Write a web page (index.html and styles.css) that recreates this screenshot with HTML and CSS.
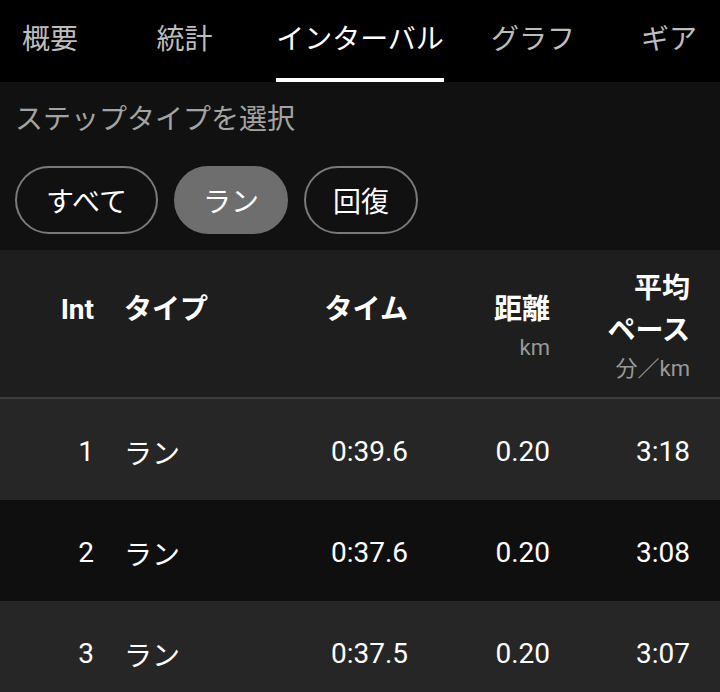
FILE: index.html
```html
<!DOCTYPE html>
<html lang="ja">
<head>
<meta charset="utf-8">
<title>インターバル</title>
<link rel="stylesheet" href="styles.css">
</head>
<body>
<nav class="tabs">
  <div class="tab"><span class="tab-label">概要</span></div>
  <div class="tab"><span class="tab-label">統計</span></div>
  <div class="tab"><span class="tab-label active">インターバル</span></div>
  <div class="tab"><span class="tab-label">グラフ</span></div>
  <div class="tab"><span class="tab-label">ギア</span></div>
</nav>

<section class="filter">
  <div class="filter-title">ステップタイプを選択</div>
  <div class="chips">
    <button class="chip wide">すべて</button>
    <button class="chip selected">ラン</button>
    <button class="chip">回復</button>
  </div>
</section>

<div class="table">
  <div class="thead">
    <div class="th num"><span class="th-label">Int</span><span class="th-unit"></span></div>
    <div class="th type"><span class="th-label">タイプ</span><span class="th-unit"></span></div>
    <div class="th"><span class="th-label">タイム</span><span class="th-unit"></span></div>
    <div class="th"><span class="th-label">距離</span><span class="th-unit">km</span></div>
    <div class="th"><span class="th-label">平均<br>ペース</span><span class="th-unit">分／km</span></div>
  </div>
  <div class="row odd">
    <div class="td num">1</div><div class="td type">ラン</div><div class="td">0:39.6</div><div class="td">0.20</div><div class="td">3:18</div>
  </div>
  <div class="row even">
    <div class="td num">2</div><div class="td type">ラン</div><div class="td">0:37.6</div><div class="td">0.20</div><div class="td">3:08</div>
  </div>
  <div class="row odd">
    <div class="td num">3</div><div class="td type">ラン</div><div class="td">0:37.5</div><div class="td">0.20</div><div class="td">3:07</div>
  </div>
</div>
</body>
</html>
```

FILE: styles.css
```css
* { box-sizing: border-box; }

html, body {
  margin: 0;
  padding: 0;
  background: #0f0f0f;
  font-family: Roboto, "Noto Sans CJK JP", sans-serif;
  color: #ffffff;
  overflow: hidden;
}

.tabs {
  display: grid;
  grid-template-columns: 100px 169px 182px 164px 108px;
  height: 82px;
  background: #000000;
  overflow: hidden;
  white-space: nowrap;
}

.tab {
  display: flex;
  justify-content: center;
  height: 82px;
}

.tab-label {
  display: flex;
  align-items: center;
  height: 82px;
  padding-bottom: 5px;
  font-size: 28px;
  color: #bdbdbd;
  border-bottom: 4px solid transparent;
}

.tab-label.active {
  color: #ffffff;
  border-bottom-color: #ffffff;
}

.filter {
  background: #111111;
  padding: 18px 0 16px 15px;
}

.filter-title {
  font-size: 28px;
  line-height: 40px;
  color: #a3a3a3;
}

.chips {
  display: flex;
  gap: 16px;
  margin-top: 26px;
}

.chip {
  height: 68px;
  padding: 5px 27px 0;
  border: 2px solid #7a7a7a;
  border-radius: 34px;
  background: transparent;
  color: #ffffff;
  font-family: Roboto, "Noto Sans CJK JP", sans-serif;
  font-size: 28px;
  line-height: 1;
}

.chip.wide {
  padding-left: 29px;
  padding-right: 29px;
}

.chip.selected {
  background: #6e6e6e;
  border-color: #6e6e6e;
}

.thead,
.row {
  display: grid;
  grid-template-columns: 94px 172px 142px 142px 140px;
  padding-right: 30px;
}

.thead {
  height: 149px;
  padding-top: 6px;
  background: #1e1e1e;
  border-bottom: 2px solid #3c3c3c;
  align-items: center;
}

.th {
  display: flex;
  flex-direction: column;
  align-items: flex-end;
  text-align: right;
  font-weight: 700;
}

.th.type {
  align-items: flex-start;
  text-align: left;
  padding-left: 30px;
}

.th-label {
  font-size: 28px;
  line-height: 42px;
}

.th-unit {
  height: 34px;
  font-size: 22px;
  line-height: 34px;
  font-weight: 400;
  color: #999999;
}

.row {
  height: 101px;
  padding-top: 4px;
  align-items: center;
  font-size: 28px;
}

.row.odd { background: #262626; }
.row.even { background: #0f0f0f; }

.td { text-align: right; }

.td.type {
  text-align: left;
  padding-left: 30px;
}
```
